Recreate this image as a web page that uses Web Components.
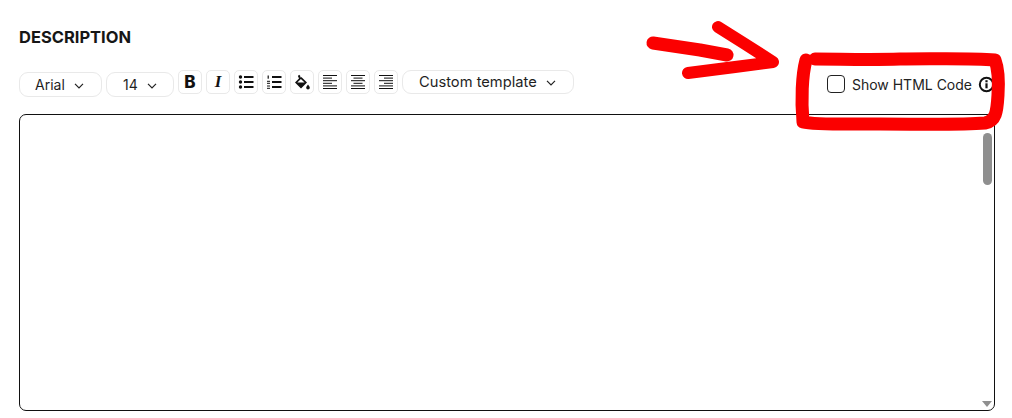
<!DOCTYPE html>
<html>
<head>
<meta charset="utf-8">
<title>Description</title>
<style>
html, body { margin: 0; padding: 0; background: #fff; }
body { width: 1012px; height: 418px; overflow: hidden; font-family: Inter, "Liberation Sans", sans-serif; color: #1a1a1a; }
</style>
</head>
<body>
<desc-editor>
  <tool-pill slot="tools" drop="2" w="83" pad="15">Arial</tool-pill>
  <tool-pill slot="tools" drop="2" w="68" pad="16">14</tool-pill>
  <tool-btn slot="tools" icon="bold"></tool-btn>
  <tool-btn slot="tools" icon="italic"></tool-btn>
  <tool-btn slot="tools" icon="ul"></tool-btn>
  <tool-btn slot="tools" icon="ol"></tool-btn>
  <tool-btn slot="tools" icon="fill"></tool-btn>
  <tool-btn slot="tools" icon="left"></tool-btn>
  <tool-btn slot="tools" icon="center"></tool-btn>
  <tool-btn slot="tools" icon="right"></tool-btn>
  <tool-pill slot="tools" drop="0" w="172" h="24" pad="16" size="14.7">Custom template</tool-pill>
  <html-toggle slot="toggle">Show HTML Code</html-toggle>
</desc-editor>
<ink-note></ink-note>

<script>
const pillTemplate = document.createElement('template');
pillTemplate.innerHTML = `
  <style>
    :host { display: block; box-sizing: border-box; height: 25px; border: 1px solid #e9e9e9; border-radius: 9px; background: #fff; font-size: 14px; color: #1f1f1f; }
    #inner { display: flex; align-items: center; height: 100%; gap: 9px; }
    svg { width: 10px; height: 6px; margin-top: 2px; }
  </style>
  <div id="inner">
    <slot></slot>
    <svg viewBox="0 0 10 6" fill="none" stroke="#222" stroke-width="1.2"><path d="M1 .8l4 4 4-4"/></svg>
  </div>`;

class ToolPill extends HTMLElement {
  constructor() {
    super();
    this.attachShadow({ mode: 'open' });
    this.shadowRoot.appendChild(pillTemplate.content.cloneNode(true));
  }
  connectedCallback() {
    this.style.width = this.getAttribute('w') + 'px';
    this.style.marginTop = this.getAttribute('drop') + 'px';
    if (this.hasAttribute('h')) this.style.height = this.getAttribute('h') + 'px';
    if (this.hasAttribute('size')) this.style.fontSize = this.getAttribute('size') + 'px';
    this.shadowRoot.querySelector('#inner').style.paddingLeft = this.getAttribute('pad') + 'px';
  }
}
customElements.define('tool-pill', ToolPill);

// editor toolbar glyphs, 16x16 box
const glyphs = {
  ul: '<g fill="#111"><circle cx="2.5" cy="3" r="1.7"/><circle cx="2.5" cy="8" r="1.7"/><circle cx="2.5" cy="13" r="1.7"/><rect x="6" y="2" width="9.5" height="2"/><rect x="6" y="7" width="9.5" height="2"/><rect x="6" y="12" width="9.5" height="2"/></g>',
  ol: '<g fill="#111"><rect x="1.6" y="1.5" width="1.2" height="3.2"/><rect x="1" y="6.8" width="3" height="1"/><rect x="1" y="8.8" width="3" height="1"/><rect x="1" y="11.5" width="3" height="1"/><rect x="1" y="13.8" width="3" height="1"/><rect x="6" y="2" width="9.5" height="2"/><rect x="6" y="7" width="9.5" height="2"/><rect x="6" y="12" width="9.5" height="2"/></g>',
  fill: '<g fill="#111"><path d="M5.2 .8L6.6 2.2 5.6 3.2 7.6 3.2 13 8.4 7 14.4 1 8.6 5 4.4 3.9 2.1z"/><path d="M6.9 5L10.6 8.5H3.3z" fill="#fff"/><path d="M14 10.6c1 1.5 1.8 2.3 1.8 3.2a1.8 1.8 0 0 1-3.6 0c0-.9.8-1.7 1.8-3.2z"/></g>',
  left: lines([[1, 15], [1, 10], [1, 15], [1, 10], [1, 15], [1, 15]]),
  center: lines([[1, 15], [3.5, 12.5], [1, 15], [3.5, 12.5], [1, 15], [1, 15]]),
  right: lines([[1, 15], [6, 15], [1, 15], [6, 15], [1, 15], [1, 15]])
};

function lines(rows) {
  return '<g stroke="#111" stroke-width="1">' + rows.map((r, i) => {
    const y = 1.5 + i * 2.6;
    return `<line x1="${r[0]}" x2="${r[1]}" y1="${y}" y2="${y}"/>`;
  }).join('') + '</g>';
}

class ToolBtn extends HTMLElement {
  constructor() {
    super();
    this.attachShadow({ mode: 'open' });
  }
  connectedCallback() {
    const icon = this.getAttribute('icon');
    let body;
    if (icon === 'bold') body = '<span style="font-weight:800;font-size:17px">B</span>';
    else if (icon === 'italic') body = '<span style="font-weight:700;font-style:italic;font-size:17px;font-family:\'Liberation Serif\',serif">I</span>';
    else body = `<svg width="16" height="16" viewBox="0 0 16 16">${glyphs[icon]}</svg>`;
    this.shadowRoot.innerHTML = `
      <style>
        :host { display: flex; align-items: center; justify-content: center; box-sizing: border-box; width: 24px; height: 24px; border: 1px solid #e9e9e9; border-radius: 5px; background: #fff; color: #111; }
      </style>
      ${body}`;
  }
}
customElements.define('tool-btn', ToolBtn);

class HtmlToggle extends HTMLElement {
  constructor() {
    super();
    this.attachShadow({ mode: 'open' });
    this.shadowRoot.innerHTML = `
      <style>
        :host { display: flex; align-items: center; font-size: 14px; color: #222; }
        #box { box-sizing: border-box; width: 18px; height: 18px; border: 1.3px solid #222; border-radius: 4px; margin-right: 7px; }
        svg { margin-left: 6px; }
      </style>
      <div id="box"></div>
      <slot></slot>
      <svg width="17" height="17" viewBox="0 0 17 17">
        <circle cx="8.5" cy="8.5" r="6.7" fill="none" stroke="#111" stroke-width="2"/>
        <rect x="7.4" y="7.3" width="2.2" height="5" fill="#111"/>
        <rect x="7.4" y="4.2" width="2.2" height="2.1" fill="#111"/>
      </svg>`;
  }
}
customElements.define('html-toggle', HtmlToggle);

const editorTemplate = document.createElement('template');
editorTemplate.innerHTML = `
  <style>
    :host { display: block; box-sizing: border-box; padding: 28px 17px 0 19px; }
    h2 { margin: 0; font-size: 16.5px; line-height: 19px; font-weight: 700; color: #161616; letter-spacing: 0; }
    #bar { display: flex; align-items: flex-start; gap: 4px; margin-top: 23px; height: 44px; }
    #toggle { margin-left: auto; padding-top: 5px; }
    #area { position: relative; box-sizing: border-box; height: 297px; border: 1px solid #111; border-radius: 7px; background: #fff; }
    #thumb { position: absolute; top: 18px; right: 2px; width: 9px; height: 52px; border-radius: 5px; background: #8f8f8f; }
    #down { position: absolute; right: 2px; bottom: 3px; width: 0; height: 0; border-left: 5px solid transparent; border-right: 5px solid transparent; border-top: 6px solid #8f8f8f; }
  </style>
  <h2>DESCRIPTION</h2>
  <div id="bar">
    <slot name="tools"></slot>
    <div id="toggle"><slot name="toggle"></slot></div>
  </div>
  <div id="area"><div id="thumb"></div><div id="down"></div></div>`;

class DescEditor extends HTMLElement {
  constructor() {
    super();
    this.attachShadow({ mode: 'open' });
    this.shadowRoot.appendChild(editorTemplate.content.cloneNode(true));
  }
}
customElements.define('desc-editor', DescEditor);

// red marker scribble drawn over the screenshot
class InkNote extends HTMLElement {
  constructor() {
    super();
    this.attachShadow({ mode: 'open' });
    this.shadowRoot.innerHTML = `
      <style>
        :host { position: absolute; left: 0; top: 0; width: 1012px; height: 418px; pointer-events: none; }
        svg { display: block; }
      </style>
      <svg width="1012" height="418" fill="none" stroke="#fb0000" stroke-linecap="round" stroke-linejoin="round">
        <path stroke-width="13" d="M653 43 L700 50 L727 55"/>
        <path stroke-width="12" d="M718 27 L745 44 L773 62 L735 67 L688 73"/>
        <path stroke-width="13" d="M806 60 C802 75 801 100 803 122 C815 125 850 124 880 124 C920 124 960 125 985 123 C996 121 997 112 998 95 C999 80 998 68 995 60 C970 58 940 59 900 59 C870 60 840 59 815 59"/>
      </svg>`;
  }
}
customElements.define('ink-note', InkNote);
</script>
</body>
</html>
